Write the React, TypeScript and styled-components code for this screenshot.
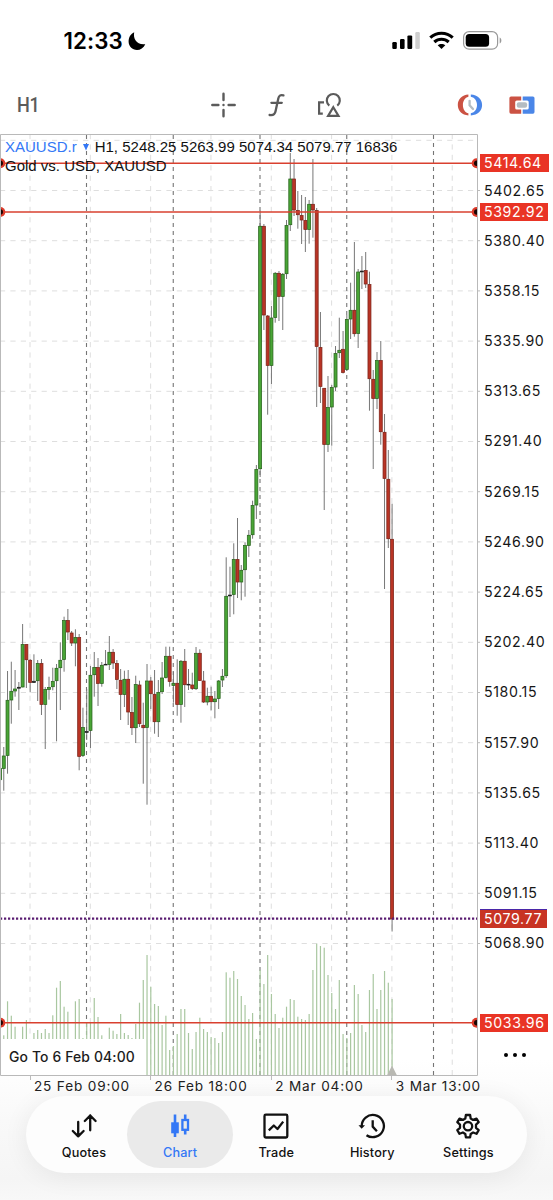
import React from "react";
import styled, { createGlobalStyle } from "styled-components";

const GlobalStyle = createGlobalStyle`
  * { box-sizing: border-box; }
  body { margin: 0; background: #fff; font-family: Inter, "Liberation Sans", sans-serif; }
  svg { display: block; flex: none; }
`;

type Kind = "u" | "d" | "n";
type Candle = [Kind, number, number, number, number];

// Each candle: direction, high, body top, body bottom, low (chart units)
const candles: Candle[] = [
  ["u", 768, 768.3, 780, 780], ["u", 747, 755.7, 768.7, 790.7], ["u", 671, 700, 755.7, 773.7], ["u", 661.7, 691, 700.3, 723.7],
  ["u", 670, 688.7, 691.3, 696.7], ["n", 682, 687, 688.5, 710], ["u", 624, 644.3, 687.3, 687.3], ["d", 644.3, 644.3, 660, 688],
  ["d", 659, 660, 682.7, 692.3], ["n", 654.3, 681, 682.7, 683], ["u", 660, 663.3, 681, 701], ["d", 659, 663.3, 704.7, 715],
  ["u", 687, 689.3, 704.7, 749], ["u", 676.7, 687.3, 689.7, 699.7], ["u", 667.7, 681.3, 687, 690.3], ["u", 664, 668, 681, 741.3],
  ["u", 642.3, 660, 668, 710], ["u", 616.7, 620.3, 659.7, 671.7], ["d", 609, 620.3, 632.3, 640], ["d", 631, 632.7, 643.3, 646],
  ["u", 629.3, 637.3, 643.3, 666.3], ["d", 634, 637.3, 756.7, 770.3], ["u", 707.7, 727.3, 755.7, 757], ["n", 689, 731.2, 732.7, 740],
  ["u", 666, 675, 730.7, 748], ["u", 652, 667.3, 675, 696.7], ["d", 658, 667.3, 683.7, 706], ["u", 662, 665, 683.7, 686.7],
  ["n", 650, 664, 665.3, 665], ["u", 636, 652, 664.7, 670], ["d", 649, 652, 663.3, 669], ["d", 660, 663.3, 679.7, 689],
  ["d", 669, 680, 694.7, 720], ["u", 670.7, 679, 694.7, 707], ["d", 670, 679, 712.3, 725], ["d", 697, 712.3, 728, 735],
  ["u", 675.7, 684.3, 728, 743], ["d", 680.7, 684.7, 724, 727], ["d", 702.7, 725, 728, 783.7], ["u", 664, 680.7, 727.7, 804.7],
  ["d", 677, 680.7, 694, 709], ["d", 670, 694, 722, 733.7], ["u", 680, 692.3, 722, 737], ["u", 662, 677.7, 692, 694],
  ["u", 646.7, 656, 677.7, 678.5], ["d", 646.7, 656, 681.7, 686.7], ["u", 671.7, 683, 685.7, 702.7], ["d", 659.3, 683, 704.7, 715.7],
  ["u", 660, 661, 704.7, 722.7], ["d", 649, 661, 685, 707], ["n", 669, 684, 685.3, 690], ["d", 672.7, 684.7, 688.7, 690],
  ["u", 647, 653, 689, 690], ["d", 649.3, 653, 680.7, 681], ["d", 671, 680.7, 702.3, 703], ["u", 687.7, 696, 702.3, 705.3],
  ["d", 686.7, 696, 702, 710.3], ["u", 691, 698.7, 702, 718.3], ["u", 680, 680.7, 698.7, 709], ["u", 669, 676, 680.3, 687],
  ["u", 557.3, 596, 676, 678], ["n", 566.7, 594.8, 596.2, 617], ["u", 543.3, 559.3, 594.7, 614.3], ["d", 518, 559.3, 582.3, 598],
  ["u", 565, 570, 582.3, 600.3], ["u", 542.3, 545.3, 570, 596.7], ["u", 530, 535, 545.7, 557], ["u", 500.7, 505.3, 535, 538.7],
  ["u", 465, 469.3, 505.3, 519], ["u", 210.7, 226, 469, 477], ["d", 224, 226, 315.3, 330], ["d", 315, 315.7, 365.7, 414.7],
  ["u", 306, 317.7, 365.7, 384], ["u", 272, 273, 317.7, 322.7], ["d", 271, 273, 296.7, 321], ["u", 273, 274, 296.7, 330],
  ["u", 220, 225.3, 274, 279], ["u", 153, 178.7, 225, 231], ["d", 159, 178.7, 210.3, 216], ["d", 191, 210.3, 215, 228.7],
  ["d", 195, 215.3, 220.3, 244], ["d", 197, 220.3, 229.7, 252], ["u", 200, 204, 229.7, 243.7], ["d", 159, 204, 210.3, 237.7],
  ["d", 208, 210.3, 346.7, 407], ["d", 312, 347.3, 386.7, 403], ["d", 388, 388, 444.7, 510], ["u", 376, 407.3, 444.7, 452],
  ["u", 385, 387.3, 407.3, 445.7], ["u", 346, 353.3, 387.3, 391], ["u", 317.7, 350, 353, 358], ["d", 331, 349, 372.7, 373.5],
  ["u", 315, 319.3, 369.7, 370.5], ["u", 282.7, 310, 319.3, 339], ["d", 242, 310, 334, 336.7], ["u", 269, 271.7, 333.7, 348],
  ["n", 256, 270.8, 272.2, 289], ["d", 252, 270.3, 284.3, 288], ["d", 271.7, 284.3, 379, 410.7], ["d", 370, 379, 398.7, 469],
  ["u", 352, 360.3, 398.7, 409], ["d", 341, 360.3, 432, 444.7], ["d", 414, 432, 478.7, 589], ["d", 450, 479, 539, 548],
  ["d", 503.7, 539, 919.3, 931.5],
];

// Top edge of each volume bar; 0 where none is shown
const volumes = [
  0, 1035.3, 1001.3, 1015.7, 1026.7, 0, 1026.7, 1020, 0, 1033, 1030, 1033, 1029, 1033, 1015.3, 987.7, 981, 1006.7,
  1011.7, 0, 1001.3, 999, 1038, 1022.7, 1023, 998, 1017, 1035.3, 0, 1027.7, 1030.7, 1034, 1014, 1033, 1035, 1038, 1024,
  1002.7, 980, 955, 986.7, 1004, 1006, 1025, 1015.7, 1050, 1046, 1034, 1009, 1009, 1033, 1049, 1032, 1017.7, 1029, 1032,
  1037, 1038, 1043, 1032, 972.3, 977.7, 971, 979, 996, 1005, 1019, 1013, 1039, 970, 984, 955, 994, 1014, 1028, 1017.7,
  1006.7, 999, 1000, 1016.7, 1019, 1020, 1014, 970, 943.7, 946, 947.7, 975, 993, 1009, 980, 1034, 1038, 1033, 985, 994,
  1025, 1032, 990, 974, 1009, 990, 971, 982.7, 999,
];

const STEP = 3.77;
const TOP = 134;
const BASE = 1075.5;
const fills: Record<Kind, string> = { u: "#49a536", d: "#b93425", n: "#333" };
const strokes: Record<Kind, string> = { u: "#28641c", d: "#7d2318", n: "#222" };

const prices = ["5402.65", "5380.40", "5358.15", "5335.90", "5313.65", "5291.40", "5269.15", "5246.90", "5224.65", "5202.40", "5180.15", "5157.90", "5135.65", "5113.40", "5091.15", "5068.90"];
const times = ["25 Feb 09:00", "26 Feb 18:00", "2 Mar 04:00", "3 Mar 13:00"];
const tags = [
  { label: "5414.64", y: 154, width: 69, color: "#e93425" },
  { label: "5392.92", y: 203, width: 68, color: "#e93425" },
  { label: "5079.77", y: 910, width: 66.5, color: "#c83323", accent: true },
  { label: "5033.96", y: 1014, width: 68, color: "#e93425" },
];

const Screen = styled.div`
  width: 553px;
  height: 1200px;
  display: flex;
  flex-direction: column;
  overflow: hidden;
  background: linear-gradient(#fff 1060px, #f9f9f9 1120px, #f5f5f5 1180px, #f8f8f8 1200px);
`;

const StatusBar = styled.header`
  height: 75px;
  padding: 30px 51px 0 63.5px;
  display: flex;
  justify-content: space-between;
  align-items: flex-start;
`;

const Clock = styled.div`
  display: flex;
  gap: 5px;
  font-size: 22.3px;
  line-height: 22px;
  font-weight: 600;
  letter-spacing: 0.1px;
  color: #000;
`;

const StatusIcons = styled.div`
  display: flex;
  gap: 9px;
`;

const Toolbar = styled.nav`
  height: 59px;
  padding: 0 18.500px 0 16.500px;
  display: grid;
  grid-template-columns: 194px 1fr auto;
  align-items: center;
`;

const Timeframe = styled.span`
  font-family: Roboto, sans-serif;
  font-size: 20.5px;
  font-weight: 500;
  letter-spacing: -0.2px;
  color: #5b5b5b;
  transform: scaleX(0.88);
  transform-origin: left;
`;

const ToolGroup = styled.div<{ $gap: number }>`
  display: flex;
  align-items: center;
  gap: ${(p) => p.$gap}px;
`;

const ChartRow = styled.main`
  position: relative;
  display: flex;
  height: 942px;
`;

const PriceAxis = styled.div`
  padding: 31.5px 0 0 4px;
  display: flex;
  flex-direction: column;
`;

const Price = styled.span`
  height: 50.2px;
  line-height: 50.2px;
  font-size: 14.2px;
  letter-spacing: 0.6px;
  color: #161616;
`;

const Tag = styled.span<{ $y: number; $w: number; $bg: string; $accent?: boolean }>`
  position: absolute;
  left: 480px;
  top: ${(p) => p.$y - TOP}px;
  width: ${(p) => p.$w}px;
  height: 18px;
  padding-left: 4px;
  line-height: 18.5px;
  font-size: 14.2px;
  letter-spacing: 0.6px;
  color: #fff;
  background: ${(p) => p.$bg};
  box-shadow: ${(p) => (p.$accent ? "0 -1px 0 #4a27a8" : "none")};
`;

const Legend = styled.div`
  position: absolute;
  left: 5px;
  top: 4px;
  font-family: "Liberation Sans", Arial, sans-serif;
  font-size: 15px;
  line-height: 18.5px;
  color: #111;
`;

const LegendLine = styled.div`
  display: flex;
  align-items: center;
  white-space: nowrap;
`;

const SymbolName = styled.span`
  color: #3478f6;
  margin-right: 6px;
`;

const Ohlc = styled.span`
  margin-left: 6px;
`;

const GoTo = styled.div`
  position: absolute;
  left: 1px;
  top: 905px;
  width: 145px;
  height: 36px;
  padding-left: 8px;
  line-height: 36px;
  font-size: 13.9px;
  font-weight: 500;
  letter-spacing: 0.15px;
  white-space: nowrap;
  color: #1c1c1c;
  background: #fff;
`;

const More = styled.div`
  position: absolute;
  left: 504px;
  top: 919px;
  display: flex;
  gap: 4.4px;
`;

const Dot = styled.i`
  width: 4.4px;
  height: 4.4px;
  border-radius: 50%;
  background: #000;
`;

const TimeAxis = styled.div`
  height: 20px;
  padding-left: 29.5px;
  display: flex;
`;

const Time = styled.span`
  width: 120.6px;
  flex: none;
  padding-left: 4.5px;
  line-height: 20px;
  font-size: 13.6px;
  letter-spacing: 0.83px;
  white-space: nowrap;
  color: #222;
  background: linear-gradient(#bbb, #bbb) 0 0 / 1px 4px no-repeat;
`;

const TabBar = styled.nav`
  width: 501px;
  height: 77px;
  margin: 0 0 0 26px;
  padding: 5px;
  display: flex;
  border-radius: 38.5px;
  background: #fdfdfd;
  box-shadow: 0 3px 26px rgba(0, 0, 0, 0.07);
`;

const Tab = styled.button<{ $active?: boolean }>`
  width: 106px;
  margin-right: -9.9px;
  height: 67px;
  flex: none;
  padding: 12px 0 0;
  border: 0;
  border-radius: 33.5px;
  display: flex;
  flex-direction: column;
  align-items: center;
  gap: 4px;
  font: 500 12.7px/20px Inter, sans-serif;
  letter-spacing: 0.15px;
  color: ${(p) => (p.$active ? "#3478f6" : "#111")};
  background: ${(p) => (p.$active ? "#eaeaea" : "transparent")};
`;

function Chart() {
  const h = Array.from({ length: 17 }, (_, k) => 140.3 + k * 50.2);
  const light = Array.from({ length: 8 }, (_, k) => 30 + k * 60.32);
  const dark = Array.from({ length: 5 }, (_, k) => 86.5 + k * 86.75);
  return (
    <svg width="480" height="942" viewBox="0 134 480 942">
      <defs>
        <clipPath id="plot"><rect x="0" y="134" width="477.5" height="942" /></clipPath>
      </defs>
      <g stroke="#dedede" strokeWidth="1" strokeDasharray="5.2 5.2">
        {h.map((y) => <line key={y} x1="0" x2="477" y1={y} y2={y} />)}
        {light.map((x) => <line key={x} x1={x} x2={x} y1="134" y2="1075" />)}
      </g>
      {h.slice(1).map((y) => <line key={y} x1="477" x2="480" y1={y} y2={y} stroke="#bbb" />)}
      <g stroke="#757575" strokeWidth="1.1" strokeDasharray="4 4">
        {dark.map((x) => <line key={x} x1={x} x2={x} y1="135" y2="1075" />)}
      </g>
      <g clipPath="url(#plot)">
        {volumes.map((y, i) => y > 0 && <rect key={i} x={i * STEP - 0.6} y={y} width="1.2" height={BASE - y} fill="#a9c7a0" />)}
        {candles.map(([kind, high, top, bottom, low], i) => {
          const x = i * STEP;
          return (
            <g key={i}>
              <line x1={x} x2={x} y1={high} y2={low} stroke="#777" strokeWidth="1" />
              <rect x={x - 1.5} y={top + 0.3} width="3" height={Math.max(0.6, bottom - top - 0.6)} fill={fills[kind]} stroke={strokes[kind]} strokeWidth="0.75" />
            </g>
          );
        })}
        <path d="M387 1075.5 L392 1065.5 L397 1075.5Z" fill="#b9b9b3" />
        <line x1="0" x2="477" y1="918.6" y2="918.6" stroke="#5a1c72" strokeWidth="2.2" strokeDasharray="2.2 1.8" />
        {[163.2, 212, 1022.8].map((y) => (
          <g key={y}>
            <line x1="0" x2="477" y1={y} y2={y} stroke="#d9402f" strokeWidth="1.5" />
            {[0.3, 476.7].map((x) => (
              <g key={x}>
                <circle cx={x} cy={y} r="5" fill="#dc3a2a" />
                <circle cx={x} cy={y} r="2.7" fill="#1c0503" />
              </g>
            ))}
          </g>
        ))}
      </g>
      <path d="M0.5 1075.5 V134.5 H477.5 V1075.5 Z" fill="none" stroke="#b9b9b9" />
    </svg>
  );
}

const Moon = () => (
  <svg width="18" height="21" viewBox="0 0 18 21">
    <path d="M6.2 2.3C4.9 8.7 8.8 15.3 17.3 14.2C15.6 18 12.4 20 9 20C4.2 20 .6 16.3 .6 11.5C.6 7.2 2.8 3.8 6.2 2.3Z" fill="#000" />
  </svg>
);

const Signal = () => (
  <svg width="28" height="20" viewBox="0 0 28 20">
    <rect x=".3" y="12" width="4.5" height="7" rx="1.2" />
    <rect x="8" y="9" width="4.6" height="10" rx="1.2" />
    <rect x="15.4" y="5.4" width="4.8" height="13.6" rx="1.2" />
    <rect x="23.3" y="2" width="4.5" height="17" rx="1.2" fill="#cfcfcf" />
  </svg>
);

const Wifi = () => (
  <svg width="25" height="20" viewBox="0 0 25 20" fill="none" stroke="#000" strokeWidth="3.1">
    <path d="M1.3 7.6C7.6 1.7 17.4 1.7 23.7 7.6" />
    <path d="M5.3 12C9.4 8.3 15.6 8.3 19.7 12" />
    <path d="M8.7 15.3C10.9 13.4 14.1 13.4 16.3 15.3L12.5 19Z" fill="#000" stroke="none" />
  </svg>
);

const Battery = () => (
  <svg width="39" height="20" viewBox="0 0 39 20">
    <rect x=".6" y="1.6" width="34" height="17.6" rx="5.5" fill="none" stroke="#999" strokeWidth="1.2" />
    <rect x="2.7" y="4" width="23.4" height="12.8" rx="3.5" />
    <path d="M36.7 7.5C38.9 8.5 38.9 12.5 36.7 13.5Z" fill="#999" />
  </svg>
);

const Crosshair = () => (
  <svg width="25" height="26" viewBox="0 0 25 26" stroke="#5b5b5b" strokeWidth="2.4" strokeLinecap="round">
    <path d="M1.3 13H7.400M17.6 13H23.7M12.5 1.8V8M12.5 18V24.2M12.5 13H12.51" />
  </svg>
);

const FunctionIcon = () => (
  <svg width="17" height="24" viewBox="0 0 17 24" fill="none" stroke="#5b5b5b" strokeWidth="2.3" strokeLinecap="round">
    <path d="M15.4 2.4C12.2 1.6 10.9 2.8 10.3 5.6L7.6 18C7 21.2 5 22.600 1.6 22M3.4 9.800H13.800" />
  </svg>
);

const Shapes = () => (
  <svg width="25" height="26" viewBox="0 0 25 26" fill="none" stroke="#5b5b5b" strokeWidth="2.2">
    <path d="M7 10.4H2.1V21.6H5.8" />
    <path d="M12.3 13.600A6.5 6.5 0 1 1 20.3 13.600" />
    <path d="M16.3 15.2L21.5 23.9H11.1Z" />
  </svg>
);

const HalfClock = () => (
  <svg width="26" height="22" viewBox="0 0 26 22">
    <path d="M11.4 .6C5 .9 .8 5.4 .8 11S5 21.1 11.4 21.4V19.3C7.9 18.5 5.9 15 5.9 11S7.9 3.5 11.4 2.7Z" fill="#cb5243" />
    <path d="M13.8 .6C20.7 .9 25.1 5.4 25.1 11S20.7 21.1 13.8 21.4V19.3C18 18.4 20 15 20 11S18 3.6 13.8 2.7Z" fill="#4a86e8" />
    <path d="M12.6 6.8V11.3L16 15" fill="none" stroke="#b4bcc2" strokeWidth="2.3" strokeLinecap="round" />
  </svg>
);

const TradePanel = () => (
  <svg width="26" height="18" viewBox="0 0 26 18">
    <path d="M2 .4H12.2V4.400H7.800Q6.200 4.400 6.200 6V12Q6.200 13.600 7.800 13.600H12.2V17.7H2Q.4 17.7 .4 16.1V2Q.4 .4 2 .4Z" fill="#cb5243" />
    <path d="M13.7 .4H23.9Q25.5 .4 25.5 2V16.1Q25.5 17.7 23.9 17.7H13.7V13.600H18.100Q19.700 13.600 19.700 12V6Q19.700 4.400 18.100 4.400H13.7Z" fill="#4a86e8" />
    <rect x="7.8" y="6.200" width="10.300" height="5.600" rx="2" fill="#b4bcc2" />
  </svg>
);

const iconProps = { width: 28, height: 26, viewBox: "0 0 28 26", fill: "none", stroke: "currentColor", strokeWidth: 2.3, strokeLinecap: "round" as const, strokeLinejoin: "round" as const };

const Quotes = () => (
  <svg {...iconProps}><path d="M8.2 9V23.4M2.8 18L8.2 23.4L13.6 18M20.2 17.3V2.5M14.8 8L20.2 2.5L25.6 8" /></svg>
);

const ChartIcon = () => (
  <svg {...iconProps} strokeLinecap="butt" strokeLinejoin="miter">
    <path d="M9 1.5V24M19.2 1.5V6M19.2 17V21.5" strokeWidth="2.6" />
    <rect x="5.2" y="9.3" width="7.6" height="11" fill="currentColor" stroke="none" />
    <rect x="16.4" y="7" width="5.6" height="9.8" strokeWidth="2.3" />
  </svg>
);

const Trade = () => (
  <svg {...iconProps}><rect x="2.5" y="1.7" width="22.800" height="22.800" rx="1.3" /><path d="M6.8 17.3L11.8 12.5L15.5 16L21.2 8.6" strokeLinecap="butt" /></svg>
);

const History = () => (
  <svg {...iconProps}>
    <path d="M3.7 13.2A11.1 11.1 0 1 1 8.5 22.2" strokeLinecap="butt" />
    <path d="M.5 12.2H7L3.7 15.8Z" fill="currentColor" stroke="none" />
    <path d="M14.7 7.2V13.6L18.9 18.2" strokeLinecap="butt" />
  </svg>
);

const Settings = () => (
  <svg {...iconProps}>
    <path d="M11.9 2H16.1L16.7 5.5L19.1 6.9L22.5 5.6L24.7 9.2L22 11.6V14.8L24.7 17.2L22.5 20.8L19.1 19.5L16.7 20.9L16.1 24.4H11.9L11.3 20.9L8.9 19.5L5.5 20.8L3.3 17.2L6 14.8V11.6L3.3 9.2L5.5 5.6L8.9 6.9L11.3 5.5Z" />
    <circle cx="14" cy="13.2" r="4.2" />
  </svg>
);

const tabs = [
  { label: "Quotes", Icon: Quotes },
  { label: "Chart", Icon: ChartIcon },
  { label: "Trade", Icon: Trade },
  { label: "History", Icon: History },
  { label: "Settings", Icon: Settings },
];

export default function App() {
  return (
    <Screen>
      <GlobalStyle />
      <StatusBar>
        <Clock>12:33<Moon /></Clock>
        <StatusIcons><Signal /><Wifi /><Battery /></StatusIcons>
      </StatusBar>
      <Toolbar>
        <Timeframe>H1</Timeframe>
        <ToolGroup $gap={32}><Crosshair /><FunctionIcon /><Shapes /></ToolGroup>
        <ToolGroup $gap={26}><HalfClock /><TradePanel /></ToolGroup>
      </Toolbar>
      <ChartRow>
        <Chart />
        <PriceAxis>{prices.map((p) => <Price key={p}>{p}</Price>)}</PriceAxis>
        {tags.map((t) => <Tag key={t.label} $y={t.y} $w={t.width} $bg={t.color} $accent={t.accent}>{t.label}</Tag>)}
        <Legend>
          <LegendLine>
            <SymbolName>XAUUSD.r</SymbolName>
            <svg width="6" height="7" viewBox="0 0 6 7"><path d="M0 0H6L3 6.5Z" fill="#3478f6" /></svg>
            <Ohlc>H1, 5248.25 5263.99 5074.34 5079.77 16836</Ohlc>
          </LegendLine>
          <LegendLine>Gold vs. USD, XAUUSD</LegendLine>
        </Legend>
        <GoTo>Go To 6 Feb 04:00</GoTo>
        <More><Dot /><Dot /><Dot /></More>
      </ChartRow>
      <TimeAxis>{times.map((t) => <Time key={t}>{t}</Time>)}</TimeAxis>
      <TabBar>
        {tabs.map(({ label, Icon }) => (
          <Tab key={label} $active={label === "Chart"}><Icon />{label}</Tab>
        ))}
      </TabBar>
    </Screen>
  );
}
